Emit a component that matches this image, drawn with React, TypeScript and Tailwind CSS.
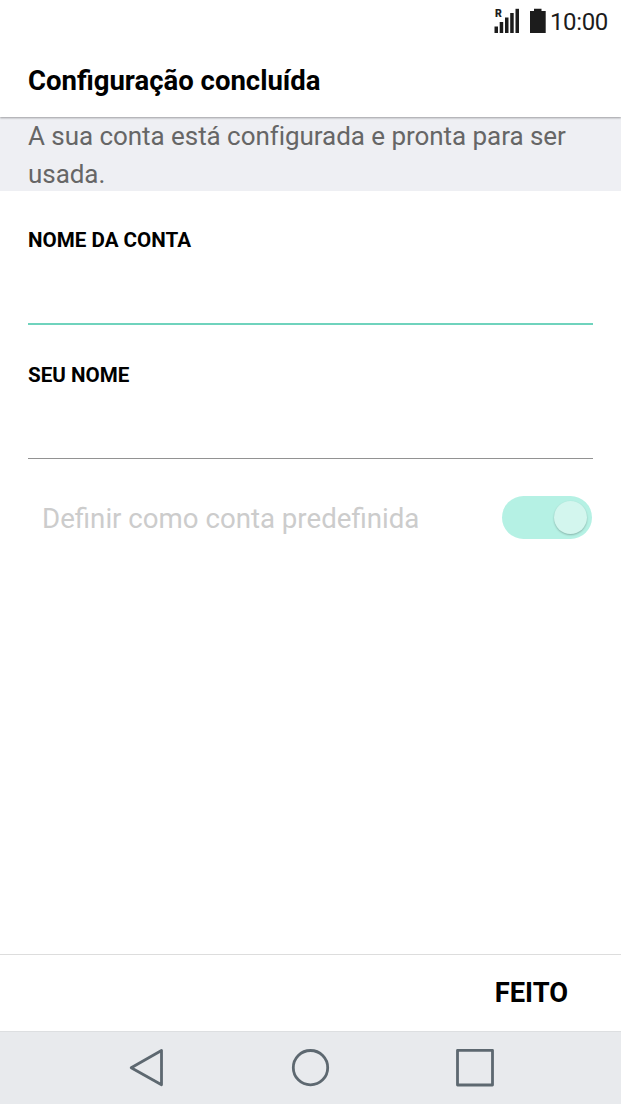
import React, { useState } from 'react';
import clsx from 'clsx';

function StatusBar() {
  return (
    <div className="relative z-20 flex h-11 shrink-0 justify-end bg-white pr-[13px]">
      {/* Signal, roaming marker and battery */}
      <div className="relative mt-2 h-[26px] w-[26px]">
        <span className="absolute left-[1px] top-0 text-[10.5px] leading-[12px] font-black text-[#1c1c1c]">R</span>
        <svg className="h-full w-full" viewBox="0 0 26 26" fill="#1c1c1c">
          <rect x="0.5" y="18.5" width="3.5" height="6.5" />
          <rect x="5.7" y="14" width="3.5" height="11" />
          <rect x="11" y="9.5" width="3.5" height="15.5" />
          <rect x="16.2" y="5" width="3.5" height="20" />
          <rect x="21.5" y="0.8" width="3.5" height="24.2" />
        </svg>
      </div>
      <svg className="ml-[9px] mt-2 h-[26px] w-[18px]" viewBox="0 0 18 26" fill="#1c1c1c">
        <path d="M5 0.700h7.500v2.300h4.200V25H1V3h4z" />
      </svg>
      <span className="ml-[3px] mt-[6px] text-[24px] leading-[32px] tracking-[-0.35px] text-[#1c1c1c]">10:00</span>
    </div>
  );
}

function Field({ label, value, onChange, active }: { label: string; value: string; onChange: (v: string) => void; active?: boolean }) {
  return (
    <label className="flex flex-col">
      <span className="text-[20.6px] leading-[24px] font-bold text-black">{label}</span>
      <input
        value={value}
        onChange={(e) => onChange(e.target.value)}
        className={clsx(
          'w-full text-[26px] outline-none',
          active ? 'h-[73px] border-b-2 border-[#6fd3bd]' : 'h-[72px] border-b border-[#929292]'
        )}
      />
    </label>
  );
}

export default function App() {
  const [accountName, setAccountName] = useState('');
  const [userName, setUserName] = useState('');

  return (
    <div className="flex h-[1104px] w-full flex-col overflow-hidden bg-white font-['Roboto',sans-serif]">
      <StatusBar />

      <header className="relative z-10 h-[73px] shrink-0 bg-white pl-7 pt-[20px] shadow-[0_1px_2px_rgba(0,0,0,0.35)]">
        <h1 className="text-[27.5px] leading-[34px] font-bold text-black">Configuração concluída</h1>
      </header>

      <p className="h-[74px] shrink-0 bg-[#eeeff3] pl-7 pr-6 text-[26px] leading-[38px] tracking-[-0.05px] text-[#666666]">
        A sua conta está configurada e pronta para ser usada.
      </p>

      <main className="flex flex-1 flex-col px-7 pt-[37px]">
        <Field label="NOME DA CONTA" value={accountName} onChange={setAccountName} active />
        <div className="mt-[38px]">
          <Field label="SEU NOME" value={userName} onChange={setUserName} />
        </div>

        <div className="mt-[37px] flex items-start justify-between pl-[14px] pr-[1px]">
          <span className="pt-px text-[27.65px] leading-[44px] text-[#cccccc]">Definir como conta predefinida</span>
          <button
            disabled
            role="switch"
            aria-checked="true"
            aria-label="Definir como conta predefinida"
            className="flex h-[43px] w-[90px] items-center justify-end rounded-full bg-[#b5f1e4] pr-[5px]"
          >
            <span className="h-[33px] w-[33px] rounded-full bg-[#d3f6ee] shadow-[0_1px_2px_rgba(0,0,0,0.25)]" />
          </button>
        </div>
      </main>

      <footer className="flex h-[77px] shrink-0 justify-end border-t border-[#dddddd] pr-[53px]">
        <button className="text-[27.3px] font-bold text-black">FEITO</button>
      </footer>

      {/* Navigation keys */}
      <nav className="flex h-[73px] shrink-0 border-t border-[#dddfe1] bg-[#e8eaed] pl-[127px]">
        <svg className="mt-[16px] h-10 w-10" viewBox="0 0 40 40" fill="none" stroke="#5d6870" strokeWidth="2.8" strokeLinejoin="round">
          <path d="M4.200 19.700 34.500 2.500v34.300z" />
        </svg>
        <svg className="ml-[123px] mt-[16px] h-10 w-10" viewBox="0 0 40 40" fill="none" stroke="#5d6870" strokeWidth="2.8">
          <circle cx="20.500" cy="19.700" r="17.200" />
        </svg>
        <svg className="ml-[125px] mt-[16px] h-10 w-10" viewBox="0 0 40 40" fill="none" stroke="#5d6870" strokeWidth="2.8" strokeLinejoin="round">
          <path d="M2.500 2.300h35v34.700h-35z" />
        </svg>
      </nav>
    </div>
  );
}
